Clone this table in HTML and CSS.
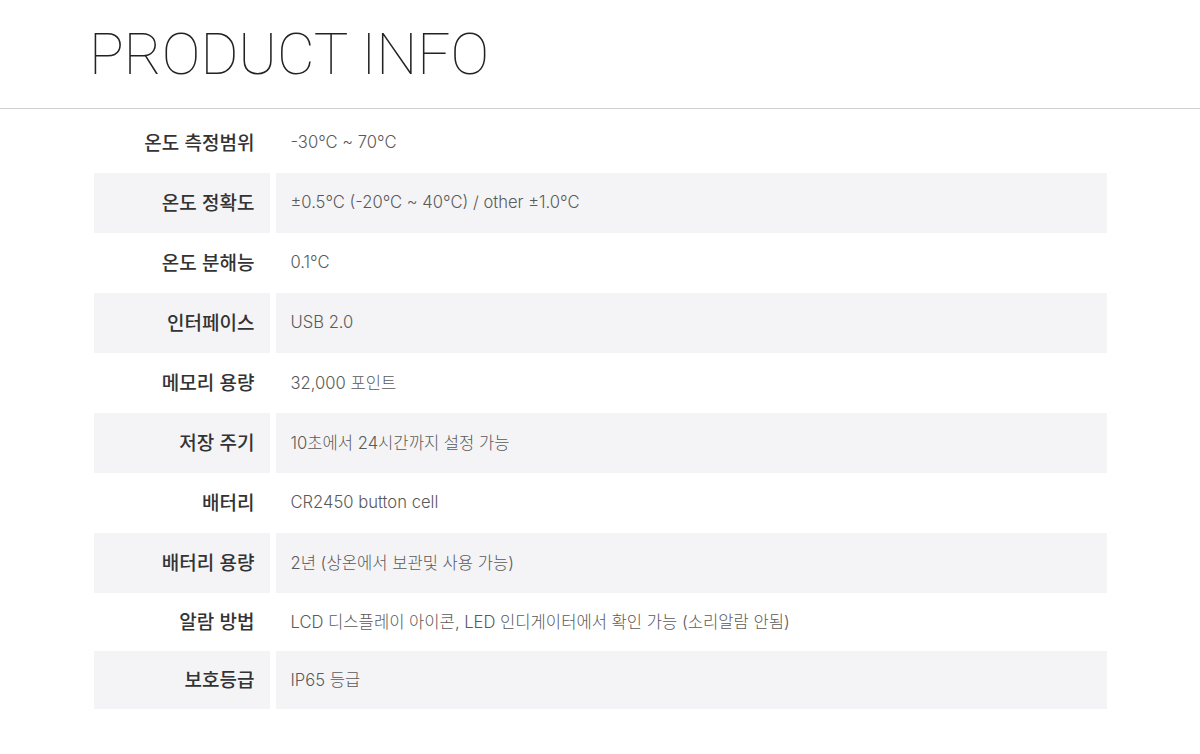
FILE: index.html
```html
<!DOCTYPE html>
<html lang="ko">
<head>
<meta charset="utf-8">
<title>Product Info</title>
<link rel="stylesheet" href="styles.css">
</head>
<body>
<header class="page-header">
  <h1 class="title">PRODUCT INFO</h1>
</header>
<section class="specs">
  <div class="row"><div class="label">온도 측정범위</div><div class="value">-30°C ~ 70°C</div></div>
  <div class="row row--alt"><div class="label">온도 정확도</div><div class="value">±0.5°C (-20°C ~ 40°C) / other ±1.0°C</div></div>
  <div class="row"><div class="label">온도 분해능</div><div class="value">0.1°C</div></div>
  <div class="row row--alt"><div class="label">인터페이스</div><div class="value">USB 2.0</div></div>
  <div class="row"><div class="label">메모리 용량</div><div class="value">32,000 포인트</div></div>
  <div class="row row--alt"><div class="label">저장 주기</div><div class="value">10초에서 24시간까지 설정 가능</div></div>
  <div class="row"><div class="label">배터리</div><div class="value">CR2450 button cell</div></div>
  <div class="row row--alt"><div class="label">배터리 용량</div><div class="value">2년 (상온에서 보관및 사용 가능)</div></div>
  <div class="row row--short"><div class="label">알람 방법</div><div class="value">LCD 디스플레이 아이콘, LED 인디게이터에서 확인 가능 (소리알람 안됨)</div></div>
  <div class="row row--alt row--short"><div class="label">보호등급</div><div class="value">IP65 등급</div></div>
</section>
</body>
</html>
```

FILE: styles.css
```css
html, body {
  margin: 0;
  padding: 0;
  background: #ffffff;
}

body {
  font-family: "Inter", "Noto Sans CJK KR", sans-serif;
  color: #333333;
}

.page-header {
  border-bottom: 1px solid #d2d2d2;
  padding: 25px 0 25px 89px;
}

.title {
  margin: 0;
  font-family: "Roboto", sans-serif;
  font-weight: 100;
  font-size: 58px;
  line-height: 58px;
  letter-spacing: 0;
  color: #222222;
}

.specs {
  width: 1013px;
  margin: 4px auto 0;
  display: flex;
  flex-direction: column;
}

.row {
  display: grid;
  grid-template-columns: 176px 1fr;
  column-gap: 6px;
  height: 60px;
}

.row--short {
  height: 58px;
}

.label,
.value {
  display: flex;
  align-items: center;
  padding-bottom: 3px;
}

.row--alt .label,
.row--alt .value {
  background: #f4f4f6;
}

.label {
  justify-content: flex-end;
  padding-right: 15px;
  font-family: "Noto Sans CJK KR", sans-serif;
  font-weight: 500;
  font-size: 19px;
  color: #333333;
}

.value {
  padding-left: 15px;
  font-family: "Inter", "Noto Sans CJK KR", sans-serif;
  font-weight: 300;
  font-size: 16.6px;
  color: #5a5a5a;
}
```
